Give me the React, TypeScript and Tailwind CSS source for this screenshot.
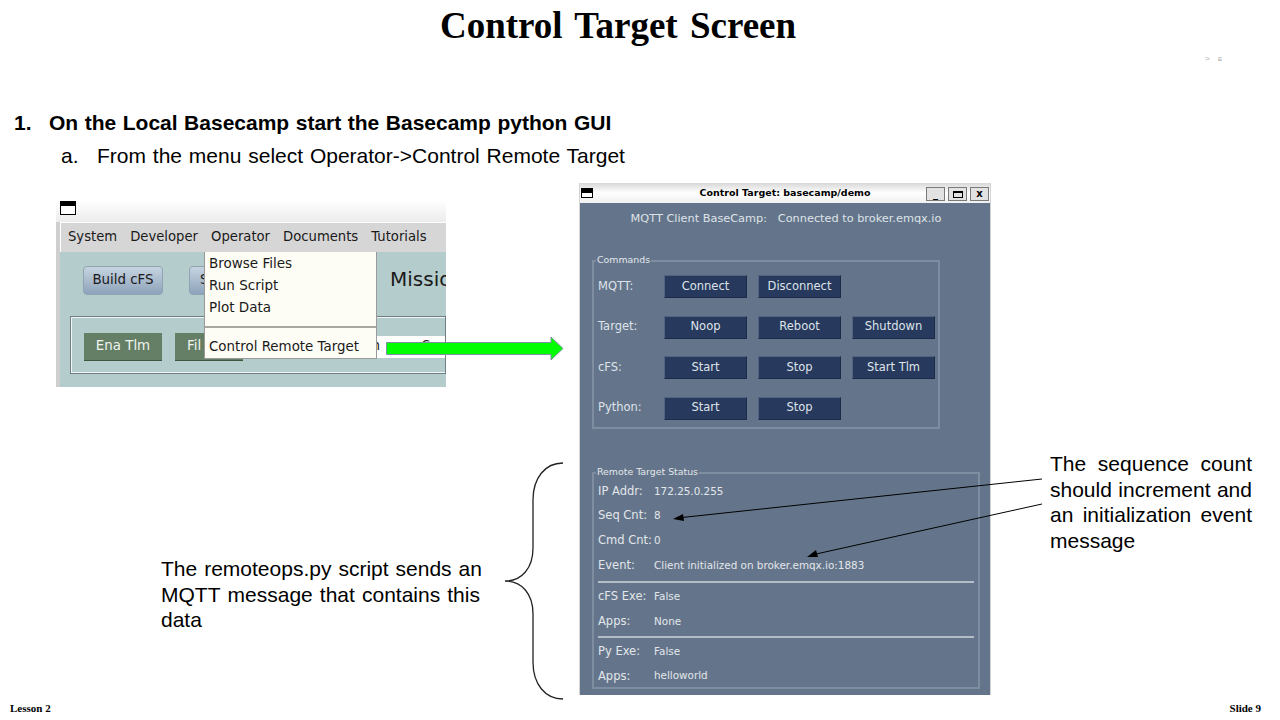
const gui = "font-['DejaVu_Sans',sans-serif]";

function CmdButton({ label }: { label: string }) {
  return (
    <div className="w-[83px] h-[23px] flex items-center justify-center bg-[#273a5e] border border-[#52637f] border-b-[#1c2b47] border-r-[#1c2b47] text-[#dfe3e8] text-[11.5px]">
      {label}
    </div>
  );
}

function CmdRow({ label, buttons }: { label: string; buttons: string[] }) {
  return (
    <div className="flex items-center h-[23px]">
      <div className="w-[66px] text-[#dfe3e8] text-[11.5px]">{label}</div>
      <div className="flex gap-[11px]">
        {buttons.map((b) => (
          <CmdButton key={b} label={b} />
        ))}
      </div>
    </div>
  );
}

function StatusRow({ label, value }: { label: string; value: string }) {
  return (
    <div className="flex items-center h-[24.7px] text-[#e3e6ea]">
      <div className="w-[56px] text-[11.5px] whitespace-nowrap">{label}</div>
      <div className="text-[10.4px]">{value}</div>
    </div>
  );
}

function WinIcon({ className }: { className: string }) {
  return (
    <div className={`absolute border border-black bg-white ${className}`}>
      <div className="h-[4px] bg-black" />
    </div>
  );
}

function TitleBtn({ children }: { children: React.ReactNode }) {
  return (
    <div className="w-[19px] h-[14px] flex items-center justify-center bg-[#e2e2e2] border border-[#7a7a7a] text-[10px] font-bold text-black leading-none">
      {children}
    </div>
  );
}

function BasecampShot() {
  return (
    <div className={`absolute left-[56px] top-[200px] w-[390px] h-[187px] overflow-hidden ${gui}`}>
      <div className="h-[22px] bg-gradient-to-b from-white to-[#ececec]" />
      <div className="flex h-[165px]">
        <div className="w-[4px] shrink-0 bg-[#cfcfcf]" />
        <div className="flex-1 min-w-0 flex flex-col bg-[#b5cccc]">
          <div className="h-[30px] flex items-center gap-[13px] pl-[7px] pb-[1px] bg-[#d6d6d6] border-t border-l border-white text-[13.2px] text-[#1a1a1a] whitespace-nowrap">
            <span>System</span>
            <span>Developer</span>
            <span>Operator</span>
            <span>Documents</span>
            <span>Tutorials</span>
          </div>
          <div className="flex items-center h-[54px] pl-[23px] pt-[2px]">
            <div className="w-[80px] h-[29px] shrink-0 flex items-center justify-center rounded-[4px] border border-[#8fa3b5] bg-gradient-to-b from-[#c6d4e0] to-[#8ea3ba] text-[13.4px] text-[#1a1a1a]">
              Build cFS
            </div>
            <div className="w-[60px] h-[29px] shrink-0 ml-[26px] pl-[10px] flex items-center rounded-[4px] border border-[#8fa3b5] bg-gradient-to-b from-[#c6d4e0] to-[#8ea3ba] text-[13.4px] text-[#1a1a1a]">
              S
            </div>
            <div className="ml-[141px] mb-[2px] text-[20px] text-[#1a1a1a] whitespace-nowrap">Missio</div>
          </div>
          <div className="ml-[10px] mt-[10px] h-[58px] flex items-center pl-[12px] pt-[3px] border-2 border-[#f2f6f6] border-r-0 outline outline-1 outline-[#6f7f7f] -outline-offset-1">
            <div className="w-[78px] h-[28px] shrink-0 flex items-center justify-center bg-[#647f65] border-b border-[#3f5540] text-[13.4px] text-[#f0f4f0]">
              Ena Tlm
            </div>
            <div className="w-[68px] h-[28px] shrink-0 ml-[13px] pl-[12px] flex items-center bg-[#647f65] border-b border-[#3f5540] text-[13.4px] text-[#f0f4f0]">
              Fil
            </div>
            <div className="ml-[-1px] flex-1 h-[22px] bg-white flex items-center pl-[125px] text-[13.4px] text-[#1a1a1a] overflow-hidden whitespace-nowrap">
              <span>m</span>
              <span className="ml-[42px]">S</span>
            </div>
          </div>
        </div>
      </div>
    </div>
  );
}

function OperatorMenu() {
  return (
    <div className={`absolute left-[204px] top-[252px] w-[173px] h-[107px] bg-[#fdfdf5] border-b border-r border-l border-[#9a9a9a] text-[13.5px] text-[#1a1a1a] ${gui}`}>
      <div className="pl-[4px]">
        <div className="h-[22px] flex items-center">Browse Files</div>
        <div className="h-[22px] flex items-center">Run Script</div>
        <div className="h-[22px] flex items-center">Plot Data</div>
      </div>
      <div className="mt-[8px] h-[2px] bg-[#a8a8a0]" />
      <div className="pl-[4px] pt-[8px] h-[30px] flex items-center text-[13.4px]">Control Remote Target</div>
    </div>
  );
}

function ControlWindow() {
  return (
    <div className={`absolute left-[579px] top-[183px] w-[412px] h-[512px] flex flex-col border-x border-[#d4d4d4] ${gui}`}>
      <div className="h-[20px] relative flex items-center justify-center bg-gradient-to-b from-[#d8d8d8] via-white to-[#f0f0f0] text-[9.5px] font-bold text-black">
        <span>Control Target: basecamp/demo</span>
        <div className="absolute right-[1px] top-[4px] flex gap-[3px]">
          <TitleBtn>_</TitleBtn>
          <TitleBtn>
            <div className="w-[10px] h-[7px] border border-black border-t-2" />
          </TitleBtn>
          <TitleBtn>x</TitleBtn>
        </div>
      </div>
      <div className="flex-1 bg-[#64758b] pl-[12px] pr-[10px]">
        <div className="h-[31px] pt-[1px] flex items-center justify-center text-[11.3px] text-[#dfe3e8] whitespace-pre">
          MQTT Client BaseCamp:{'   '}Connected to broker.emqx.io
        </div>
        <div className="relative mt-[26px] w-[348px] h-[169px] border-2 border-[#7e8da0] pl-[4px] pt-[13px]">
          <div className="absolute left-[2px] top-[-8px] bg-[#64758b] px-[1px] text-[9.4px] leading-[12px] text-[#e3e6ea]">
            Commands
          </div>
          <div className="flex flex-col gap-[17.5px]">
            <CmdRow label="MQTT:" buttons={['Connect', 'Disconnect']} />
            <CmdRow label="Target:" buttons={['Noop', 'Reboot', 'Shutdown']} />
            <CmdRow label="cFS:" buttons={['Start', 'Stop', 'Start Tlm']} />
            <CmdRow label="Python:" buttons={['Start', 'Stop']} />
          </div>
        </div>
        <div className="relative mt-[43px] w-[388px] h-[217px] border-2 border-[#7e8da0] px-[4px] pt-[5px]">
          <div className="absolute left-[2px] top-[-8px] bg-[#64758b] px-[1px] text-[9.4px] leading-[12px] text-[#e3e6ea]">
            Remote Target Status
          </div>
          <StatusRow label="IP Addr:" value="172.25.0.255" />
          <StatusRow label="Seq Cnt:" value="8" />
          <StatusRow label="Cmd Cnt:" value="0" />
          <StatusRow label="Event:" value="Client initialized on broker.emqx.io:1883" />
          <div className="h-[2px] bg-[#b4bcc6] mt-[3px] mb-[2px]" />
          <StatusRow label="cFS Exe:" value="False" />
          <StatusRow label="Apps:" value="None" />
          <div className="h-[2px] bg-[#b4bcc6] mt-[2px] mb-[1px]" />
          <StatusRow label="Py Exe:" value="False" />
          <StatusRow label="Apps:" value="helloworld" />
        </div>
      </div>
    </div>
  );
}

export default function App() {
  return (
    <div className="relative w-[1280px] h-[720px] bg-white overflow-hidden text-black font-['Liberation_Sans',sans-serif]">
      <h1 className="absolute left-[440px] top-[4px] text-[37px] leading-[44px] font-bold font-['Liberation_Serif',serif] [word-spacing:3px] whitespace-nowrap">
        Control Target Screen
      </h1>

      {/* tiny specks top right */}
      <div className="absolute left-[1205px] top-[55px] text-[8px] leading-[8px] text-[#aaaaaa] tracking-[3px]">&gt; ɕ</div>

      <div className="absolute left-[14px] top-[111px] flex text-[21px] leading-[24px] font-bold whitespace-nowrap">
        <span className="w-[35px]">1.</span>
        <span className="[word-spacing:0.7px]">On the Local Basecamp start the Basecamp python GUI</span>
      </div>
      <div className="absolute left-[61px] top-[144px] flex text-[21px] leading-[24px] whitespace-nowrap">
        <span className="w-[36px]">a.</span>
        <span className="[word-spacing:1px]">From the menu select Operator-&gt;Control Remote Target</span>
      </div>

      <BasecampShot />
      <WinIcon className="left-[60px] top-[201px] w-[16px] h-[14px]" />
      <OperatorMenu />

      {/* green arrow */}
      <svg className="absolute left-[386px] top-[336px]" width="178" height="25" viewBox="0 0 178 25">
        <path d="M0.5 6.5H165V1L177 12.5L165 24V18.5H0.5Z" fill="#00ff00" stroke="#7f8fa8" strokeWidth="1" />
      </svg>

      <ControlWindow />
      <WinIcon className="left-[581px] top-[188px] w-[12px] h-[10px]" />

      {/* brace */}
      <svg className="absolute left-[500px] top-[458px]" width="70" height="246" viewBox="0 0 70 246">
        <path
          d="M63 5C45 5 33 20 33 42V90C33 110 22 123 5 123C22 123 33 136 33 156V204C33 226 45 241 63 241"
          fill="none"
          stroke="#222222"
          strokeWidth="1.3"
        />
      </svg>

      {/* callout arrows */}
      <svg className="absolute left-[660px] top-[470px]" width="390" height="100" viewBox="0 0 390 100">
        <path d="M382 9L22 47.5" stroke="#000" strokeWidth="1" />
        <path d="M13 49L23 44L24 51Z" fill="#000" />
        <path d="M382 34L156 84" stroke="#000" strokeWidth="1" />
        <path d="M147 87L156 80L158 87Z" fill="#000" />
      </svg>

      <div className="absolute left-[1050px] top-[451px] w-[202px] text-[21px] leading-[25.7px]">
        <div className="flex justify-between"><span>The</span><span>sequence</span><span>count</span></div>
        <div className="flex justify-between"><span>should</span><span>increment</span><span>and</span></div>
        <div className="flex justify-between"><span>an</span><span>initialization</span><span>event</span></div>
        <div>message</div>
      </div>

      <div className="absolute left-[161px] top-[556px] w-[321px] text-[21px] leading-[25.7px]">
        <div className="flex justify-between"><span>The</span><span>remoteops.py</span><span>script</span><span>sends</span><span>an</span></div>
        <div className="flex justify-between pr-[2px]"><span>MQTT</span><span>message</span><span>that</span><span>contains</span><span>this</span></div>
        <div>data</div>
      </div>

      <div className="absolute left-[10px] top-[702px] text-[11px] leading-[12px] font-bold font-['Liberation_Serif',serif]">Lesson 2</div>
      <div className="absolute right-[19px] top-[702px] text-[11px] leading-[12px] font-bold font-['Liberation_Serif',serif]">Slide 9</div>
    </div>
  );
}
